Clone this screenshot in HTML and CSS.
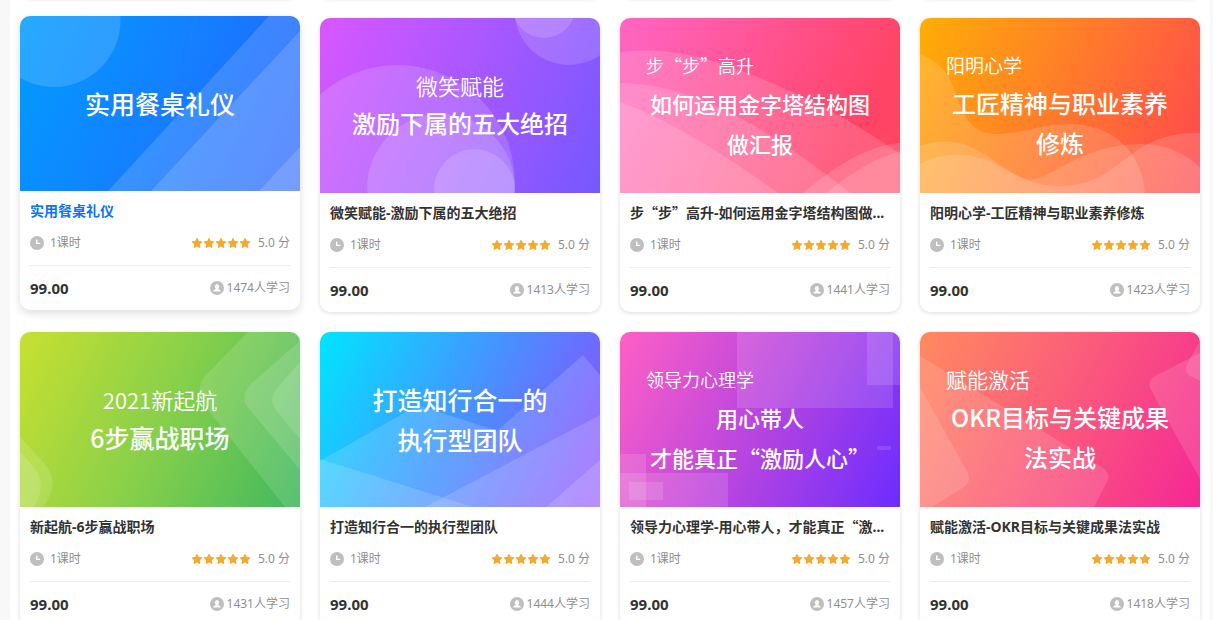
FILE: index.html
```html
<!DOCTYPE html>
<html lang="zh-CN">

<head>
    <meta charset="UTF-8">
    <meta name="viewport" content="width=device-width, initial-scale=1.0">
    <title>课程列表</title>
    <link rel="stylesheet" href="styles.css">
</head>

<body>
    <!-- 图标 -->
    <svg class="symbols" aria-hidden="true">
        <symbol id="icon-clock" viewBox="0 0 14 14">
            <circle cx="7" cy="7" r="7" fill="#bfbfbf" />
            <path d="M6.7 3.6V7.4H10.2" fill="none" stroke="#fff" stroke-width="1.4" />
        </symbol>
        <symbol id="icon-user" viewBox="0 0 14 14">
            <circle cx="7" cy="7" r="7" fill="#bfbfbf" />
            <ellipse cx="7" cy="5.4" rx="2.1" ry="2.5" fill="#fff" />
            <path d="M3.2 10.6C3.2 9.2 4.4 8.8 5.8 8.3V7H8.2V8.3C9.6 8.8 10.8 9.2 10.8 10.6Z" fill="#fff" />
        </symbol>
        <symbol id="icon-stars" viewBox="0 0 58 10">
            <g fill="#f7a92b" stroke="#f7a92b" stroke-width="1.4" stroke-linejoin="round">
                <path id="star" d="M5 .7L6.3 3.5L9.4 3.9L7.1 6.1L7.7 9.2L5 7.7L2.3 9.2L2.9 6.1L.6 3.9L3.7 3.5Z" />
                <use href="#star" x="12" />
                <use href="#star" x="24" />
                <use href="#star" x="36" />
                <use href="#star" x="48" />
            </g>
        </symbol>
    </svg>

    <main class="content">
        <!-- 上一行卡片的底部 -->
        <div class="course-list prev-row" aria-hidden="true">
            <div class="course-card"></div>
            <div class="course-card"></div>
            <div class="course-card"></div>
            <div class="course-card"></div>
        </div>

        <div class="course-list">
            <a class="course-card active" href="#">
                <div class="cover cover-blue">
                    <svg class="cover-bg" viewBox="0 0 280 175" preserveAspectRatio="none">
                        <circle cx="34" cy="4.5" r="66.5" />
                        <path d="M88 175L249 0H280V175Z" />
                        <path d="M131 175L280 15V175Z" />
                        <path d="M239 175L280 131V175Z" />
                    </svg>
                    <div class="cover-title size-l">实用餐桌礼仪</div>
                </div>
                <div class="info">
                    <h3 class="title">实用餐桌礼仪</h3>
                    <div class="meta">
                        <span class="hours"><svg class="icon"><use href="#icon-clock" /></svg>1课时</span>
                        <span class="score"><svg class="stars"><use href="#icon-stars" /></svg>5.0 分</span>
                    </div>
                    <div class="bottom">
                        <span class="price">99.00</span>
                        <span class="learners"><svg class="icon"><use href="#icon-user" /></svg>1474人学习</span>
                    </div>
                </div>
            </a>

            <a class="course-card" href="#">
                <div class="cover cover-purple">
                    <svg class="cover-bg" viewBox="0 0 280 175" preserveAspectRatio="none">
                        <circle cx="249" cy="-7.5" r="54.5" />
                        <circle cx="224" cy="-11.7" r="31.7" />
                        <circle cx="77.7" cy="164" r="117" />
                        <circle cx="121" cy="170" r="74" />
                        <circle cx="154.4" cy="171.5" r="40.4" />
                    </svg>
                    <div class="cover-sub size-s">微笑赋能</div>
                    <div class="cover-title">激励下属的五大绝招</div>
                </div>
                <div class="info">
                    <h3 class="title">微笑赋能-激励下属的五大绝招</h3>
                    <div class="meta">
                        <span class="hours"><svg class="icon"><use href="#icon-clock" /></svg>1课时</span>
                        <span class="score"><svg class="stars"><use href="#icon-stars" /></svg>5.0 分</span>
                    </div>
                    <div class="bottom">
                        <span class="price">99.00</span>
                        <span class="learners"><svg class="icon"><use href="#icon-user" /></svg>1413人学习</span>
                    </div>
                </div>
            </a>

            <a class="course-card" href="#">
                <div class="cover cover-pink">
                    <svg class="cover-bg" viewBox="0 0 280 175" preserveAspectRatio="none">
                        <path d="M0 34.5C55 26 110 45 190 82C228 101 255 119 280 136V175H0Z" />
                        <path d="M0 65C75 66 145 108 230 175H0Z" />
                        <path d="M0 84C50 102 105 137 158 175H0Z" />
                        <path d="M183 175C215 148 247 128 280 125V175Z" />
                        <path d="M206 175C231 155 255 140 280 133V175Z" />
                    </svg>
                    <div class="cover-sub left">步“步”高升</div>
                    <div class="cover-title size-s">如何运用金字塔结构图<br>做汇报</div>
                </div>
                <div class="info">
                    <h3 class="title">步<span class="quote">“</span>步<span class="quote">”</span>高升-如何运用金字塔结构图做...</h3>
                    <div class="meta">
                        <span class="hours"><svg class="icon"><use href="#icon-clock" /></svg>1课时</span>
                        <span class="score"><svg class="stars"><use href="#icon-stars" /></svg>5.0 分</span>
                    </div>
                    <div class="bottom">
                        <span class="price">99.00</span>
                        <span class="learners"><svg class="icon"><use href="#icon-user" /></svg>1441人学习</span>
                    </div>
                </div>
            </a>

            <a class="course-card" href="#">
                <div class="cover cover-orange">
                    <svg class="cover-bg" viewBox="0 0 280 175" preserveAspectRatio="none">
                        <path d="M0 36C20 43 31 58 38 82C47 108 59 117 80 116C104 115 122 106 150 106C196 107 222 136 225 175H0Z" />
                        <path d="M0 128C20 121 40 122 57 132C75 142 91 157 110 162C135 160 160 126 222 126C246 126 264 135 280 149V175H0Z" />
                        <path d="M0 146C22 135 43 134 67 142C90 154 108 167 137 168C178 168 190 151 207 140C232 120 252 115 280 115V175H0Z" />
                    </svg>
                    <div class="cover-sub left size-m">阳明心学</div>
                    <div class="cover-title">工匠精神与职业素养<br>修炼</div>
                </div>
                <div class="info">
                    <h3 class="title">阳明心学-工匠精神与职业素养修炼</h3>
                    <div class="meta">
                        <span class="hours"><svg class="icon"><use href="#icon-clock" /></svg>1课时</span>
                        <span class="score"><svg class="stars"><use href="#icon-stars" /></svg>5.0 分</span>
                    </div>
                    <div class="bottom">
                        <span class="price">99.00</span>
                        <span class="learners"><svg class="icon"><use href="#icon-user" /></svg>1423人学习</span>
                    </div>
                </div>
            </a>

            <a class="course-card" href="#">
                <div class="cover cover-green">
                    <svg class="cover-bg" viewBox="0 0 280 175" preserveAspectRatio="none">
                        <path d="M228 0L185 44C178 52 178 64 185 74L265 175H280V0Z" />
                        <path d="M280 9L231 52C222 61 222 69 230 78L280 138Z" />
                        <path d="M280 30L256 57C251 64 251 70 255 77L280 107Z" />
                        <path d="M0 105L24 131C35 144 36 157 23 175H0Z" />
                        <path d="M0 119L15 137C23 148 23 160 14 175H0Z" />
                    </svg>
                    <div class="cover-sub size-s">2021新起航</div>
                    <div class="cover-title size-l">6步赢战职场</div>
                </div>
                <div class="info">
                    <h3 class="title">新起航-6步赢战职场</h3>
                    <div class="meta">
                        <span class="hours"><svg class="icon"><use href="#icon-clock" /></svg>1课时</span>
                        <span class="score"><svg class="stars"><use href="#icon-stars" /></svg>5.0 分</span>
                    </div>
                    <div class="bottom">
                        <span class="price">99.00</span>
                        <span class="learners"><svg class="icon"><use href="#icon-user" /></svg>1431人学习</span>
                    </div>
                </div>
            </a>

            <a class="course-card" href="#">
                <div class="cover cover-cyan">
                    <svg class="cover-bg" viewBox="0 0 280 175" preserveAspectRatio="none">
                        <path d="M0 129L98 73L177 99L263 23L280 43V175H0Z" />
                        <path d="M0 127L153 175H0Z" />
                        <path d="M105 175L280 83V175Z" />
                        <path d="M226 175L280 128V175Z" />
                    </svg>
                    <div class="cover-title size-l">打造知行合一的<br>执行型团队</div>
                </div>
                <div class="info">
                    <h3 class="title">打造知行合一的执行型团队</h3>
                    <div class="meta">
                        <span class="hours"><svg class="icon"><use href="#icon-clock" /></svg>1课时</span>
                        <span class="score"><svg class="stars"><use href="#icon-stars" /></svg>5.0 分</span>
                    </div>
                    <div class="bottom">
                        <span class="price">99.00</span>
                        <span class="learners"><svg class="icon"><use href="#icon-user" /></svg>1444人学习</span>
                    </div>
                </div>
            </a>

            <a class="course-card" href="#">
                <div class="cover cover-violet">
                    <svg class="cover-bg" viewBox="0 0 280 175" preserveAspectRatio="none">
                        <rect x="117" y="0" width="156" height="76" />
                        <rect x="247" y="0" width="33" height="53" />
                        <rect x="257" y="114" width="14" height="4" />
                        <rect x="0" y="122" width="26" height="53" />
                        <rect x="0" y="141" width="108" height="34" />
                        <rect x="9" y="150" width="34" height="18" />
                    </svg>
                    <div class="cover-sub left">领导力心理学</div>
                    <div class="cover-title size-s">用心带人<br>才能真正“激励人心”</div>
                </div>
                <div class="info">
                    <h3 class="title">领导力心理学-用心带人，才能真正<span class="quote">“</span>激...</h3>
                    <div class="meta">
                        <span class="hours"><svg class="icon"><use href="#icon-clock" /></svg>1课时</span>
                        <span class="score"><svg class="stars"><use href="#icon-stars" /></svg>5.0 分</span>
                    </div>
                    <div class="bottom">
                        <span class="price">99.00</span>
                        <span class="learners"><svg class="icon"><use href="#icon-user" /></svg>1457人学习</span>
                    </div>
                </div>
            </a>

            <a class="course-card" href="#">
                <div class="cover cover-coral">
                    <svg class="cover-bg" viewBox="0 0 280 175" preserveAspectRatio="none">
                        <path d="M0 24L183 136C188 140 190 144 187 150L174 175H0Z" />
                        <path d="M0 55L48 141C50 147 49 151 44 155L12 175H0Z" />
                        <path d="M280 21L235 44C229 48 228 52 231 58L280 147Z" />
                        <path d="M280 9L267 32C265 37 266 41 270 44L280 49Z" />
                    </svg>
                    <div class="cover-sub left size-xm">赋能激活</div>
                    <div class="cover-title">OKR目标与关键成果<br>法实战</div>
                </div>
                <div class="info">
                    <h3 class="title">赋能激活-OKR目标与关键成果法实战</h3>
                    <div class="meta">
                        <span class="hours"><svg class="icon"><use href="#icon-clock" /></svg>1课时</span>
                        <span class="score"><svg class="stars"><use href="#icon-stars" /></svg>5.0 分</span>
                    </div>
                    <div class="bottom">
                        <span class="price">99.00</span>
                        <span class="learners"><svg class="icon"><use href="#icon-user" /></svg>1418人学习</span>
                    </div>
                </div>
            </a>
        </div>
    </main>
</body>

</html>
```
FILE: styles.css
```css
* {
    box-sizing: border-box;
}

body {
    height: 100vh;
    margin: 0;
    padding: 0 3px 0 10px;
    overflow: hidden;
    background-color: #f8f8f8;
    font-family: "Noto Sans", "Noto Sans CJK SC", sans-serif;
    font-size: 12px;
    line-height: 20px;
    color: #8f8f8f;
}

.symbols {
    display: none;
}

.content {
    min-height: 100vh;
    padding: 0 10px;
    background-color: #fff;
    overflow: hidden;
}

.course-list {
    display: grid;
    grid-template-columns: repeat(4, 1fr);
    gap: 20px;
}

.prev-row {
    margin: -42px 0 20px;
}

.prev-row .course-card {
    height: 40px;
}

.course-card {
    display: block;
    min-width: 0;
    border-radius: 10px;
    background-color: #fff;
    box-shadow: 0 1px 4px rgba(0, 0, 0, 0.14);
    overflow: hidden;
    color: inherit;
    text-decoration: none;
}

/* 鼠标悬停时上浮 */
.course-card.active {
    transform: translateY(-2px);
    box-shadow: 0 3px 8px rgba(0, 0, 0, 0.14);
}

.course-card.active .title {
    color: #0a73ff;
}

/* 封面 */
.cover {
    position: relative;
    display: flex;
    flex-direction: column;
    justify-content: center;
    aspect-ratio: 8 / 5;
    padding-bottom: 2px;
    color: #fff;
    font-family: "Noto Sans CJK SC", sans-serif;
    line-height: 40px;
    text-align: center;
    white-space: nowrap;
}

.cover-bg {
    position: absolute;
    top: 0;
    left: 0;
    width: 100%;
    height: 100%;
    fill: #fff;
    fill-opacity: 0.15;
}

.cover-title,
.cover-sub {
    position: relative;
}

.cover-title {
    font-size: 24px;
    font-weight: 500;
}

.cover-sub {
    font-size: 18px;
    font-weight: 350;
    line-height: 36px;
}

.left {
    padding-left: 26px;
    text-align: left;
}

.size-m {
    font-size: 19px;
}

.size-xm {
    font-size: 21px;
}

.size-s {
    font-size: 22px;
}

.size-l {
    font-size: 25px;
}

.cover-blue {
    background: linear-gradient(115deg, #009cff, #1480ff 50%, #255fff);
}

.cover-purple {
    background: linear-gradient(115deg, #d957ff, #7558ff);
}

.cover-pink {
    background: linear-gradient(115deg, #ff66c4, #ff4468 80%, #ff4460);
}

.cover-orange {
    background: linear-gradient(115deg, #ffae05, #ff7a2c 50%, #ff4550);
}

.cover-green {
    background: linear-gradient(115deg, #c8e030, #88d04a 50%, #40b85f);
}

.cover-cyan {
    background: linear-gradient(115deg, #00e5ff, #4594ff 50%, #9048ff);
}

.cover-violet {
    background: linear-gradient(115deg, #ff5fc5, #b845e0 50%, #6c2cff);
}

.cover-coral {
    background: linear-gradient(115deg, #ff8a5f, #fb5a7c 50%, #f52795);
}

.cover-green .cover-bg,
.cover-violet .cover-bg,
.cover-coral .cover-bg {
    fill-opacity: 0.13;
}

/* 课程信息 */
.info {
    padding: 10px 10px 0;
}

.title {
    margin: 0 0 12px;
    overflow: hidden;
    color: #333;
    font-size: 14px;
    font-weight: bold;
    line-height: 20px;
    text-overflow: ellipsis;
    white-space: nowrap;
}

.quote {
    font-family: "Noto Sans CJK SC", sans-serif;
    line-height: 1;
}

.meta {
    display: flex;
    justify-content: space-between;
    padding-bottom: 12px;
    border-bottom: 1px solid #eee;
}

.bottom {
    display: flex;
    justify-content: space-between;
    align-items: center;
    height: 43px;
    margin-bottom: 1px;
}

.hours,
.score,
.learners {
    display: flex;
    align-items: center;
    height: 20px;
}

.hours {
    gap: 6px;
}

.score {
    gap: 8px;
}

.learners {
    gap: 3px;
}

.icon {
    width: 14px;
    height: 14px;
}

.stars {
    width: 58px;
    height: 10px;
    overflow: visible;
}

.price {
    color: #333;
    font-size: 15px;
    font-weight: bold;
}
```
